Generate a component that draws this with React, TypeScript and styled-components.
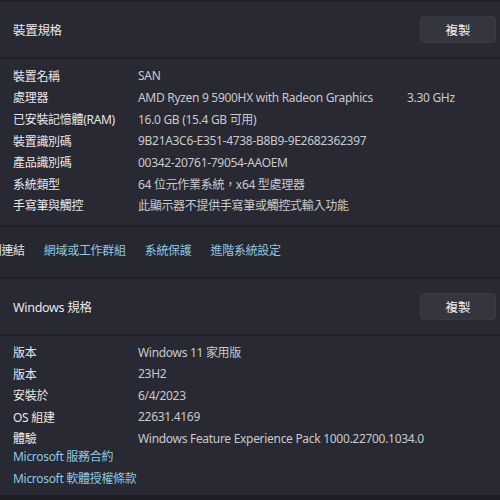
import styled, { createGlobalStyle } from 'styled-components';

const FONT = `"Noto Sans", "Noto Sans CJK TC", sans-serif`;

const GlobalStyle = createGlobalStyle`
  html, body {
    margin: 0;
    padding: 0;
    background: #1e1f25;
    font-family: ${FONT};
    letter-spacing: -0.3px;
    overflow: hidden;
  }
`;

const Page = styled.div`
  width: 500px;
  height: 500px;
  display: flex;
  flex-direction: column;
  padding-top: 2px;
  box-sizing: border-box;
  gap: 2px;
`;

const Panel = styled.section`
  background: #282932;
  display: flex;
  flex-direction: column;
`;

const Header = styled.div`
  height: 55px;
  display: flex;
  align-items: center;
  justify-content: space-between;
  padding: 0 4px 0 13px;
  border-bottom: 2px solid #202128;
`;

const Title = styled.div`
  color: #e8e8ea;
  font-size: 12.5px;
`;

const CopyButton = styled.button`
  width: 76px;
  height: 27px;
  background: #34353e;
  border: 1px solid #393a43;
  border-radius: 4px;
  color: #f0f0f2;
  font-family: ${FONT};
  font-size: 12.5px;
  padding: 0;
`;

const Rows = styled.div<{ $top: number; $bottom: number }>`
  display: flex;
  flex-direction: column;
  padding: ${(p) => p.$top}px 0 ${(p) => p.$bottom}px 13px;
`;

const Row = styled.div`
  display: grid;
  grid-template-columns: 125px 269px auto;
  height: 21.6px;
  align-items: center;
  font-size: 12px;
  white-space: nowrap;
`;

const Label = styled.span`
  color: #e6e6e8;
`;

const Value = styled.span`
  color: #c9c9cc;
`;

const Links = styled.div`
  display: flex;
  flex-direction: column;
  margin-top: -3.5px;
`;

const LinkText = styled.span`
  color: #8fc8e0;
  font-size: 12px;
  height: 21.6px;
  display: flex;
  align-items: center;
`;

const LinksBar = styled.div`
  background: #26272f;
  height: 50px;
  box-sizing: border-box;
  padding-bottom: 4px;
  display: flex;
  align-items: center;
  gap: 19px;
  font-size: 12px;
  white-space: nowrap;
`;

const BarLabel = styled.span`
  color: #e6e6e8;
  margin-left: -22px;
`;

const BarLink = styled.span`
  color: #8fc8e0;
`;

const device: [string, string, string?][] = [
  ['裝置名稱', 'SAN'],
  ['處理器', 'AMD Ryzen 9 5900HX with Radeon Graphics', '3.30 GHz'],
  ['已安裝記憶體(RAM)', '16.0 GB (15.4 GB 可用)'],
  ['裝置識別碼', '9B21A3C6-E351-4738-B8B9-9E2682362397'],
  ['產品識別碼', '00342-20761-79054-AAOEM'],
  ['系統類型', '64 位元作業系統，x64 型處理器'],
  ['手寫筆與觸控', '此顯示器不提供手寫筆或觸控式輸入功能'],
];

const windows: [string, string][] = [
  ['版本', 'Windows 11 家用版'],
  ['版本', '23H2'],
  ['安裝於', '6/4/2023'],
  ['OS 組建', '22631.4169'],
  ['體驗', 'Windows Feature Experience Pack 1000.22700.1034.0'],
];

export default function App() {
  return (
    <>
      <GlobalStyle />
      <Page>
        <Panel>
          <Header>
            <Title>裝置規格</Title>
            <CopyButton>複製</CopyButton>
          </Header>
          <Rows $top={6} $bottom={9}>
            {device.map(([k, v, extra]) => (
              <Row key={k}>
                <Label>{k}</Label>
                <Value>{v}</Value>
                {extra && <Value>{extra}</Value>}
              </Row>
            ))}
          </Rows>
        </Panel>
        <LinksBar>
          <BarLabel>相關連結</BarLabel>
          <BarLink>網域或工作群組</BarLink>
          <BarLink>系統保護</BarLink>
          <BarLink>進階系統設定</BarLink>
        </LinksBar>
        <Panel>
          <Header>
            <Title>Windows 規格</Title>
            <CopyButton>複製</CopyButton>
          </Header>
          <Rows $top={5} $bottom={6}>
            {windows.map(([k, v], i) => (
              <Row key={i}>
                <Label>{k}</Label>
                <Value>{v}</Value>
              </Row>
            ))}
            <Links>
              <LinkText>Microsoft 服務合約</LinkText>
              <LinkText>Microsoft 軟體授權條款</LinkText>
            </Links>
          </Rows>
        </Panel>
      </Page>
    </>
  );
}
